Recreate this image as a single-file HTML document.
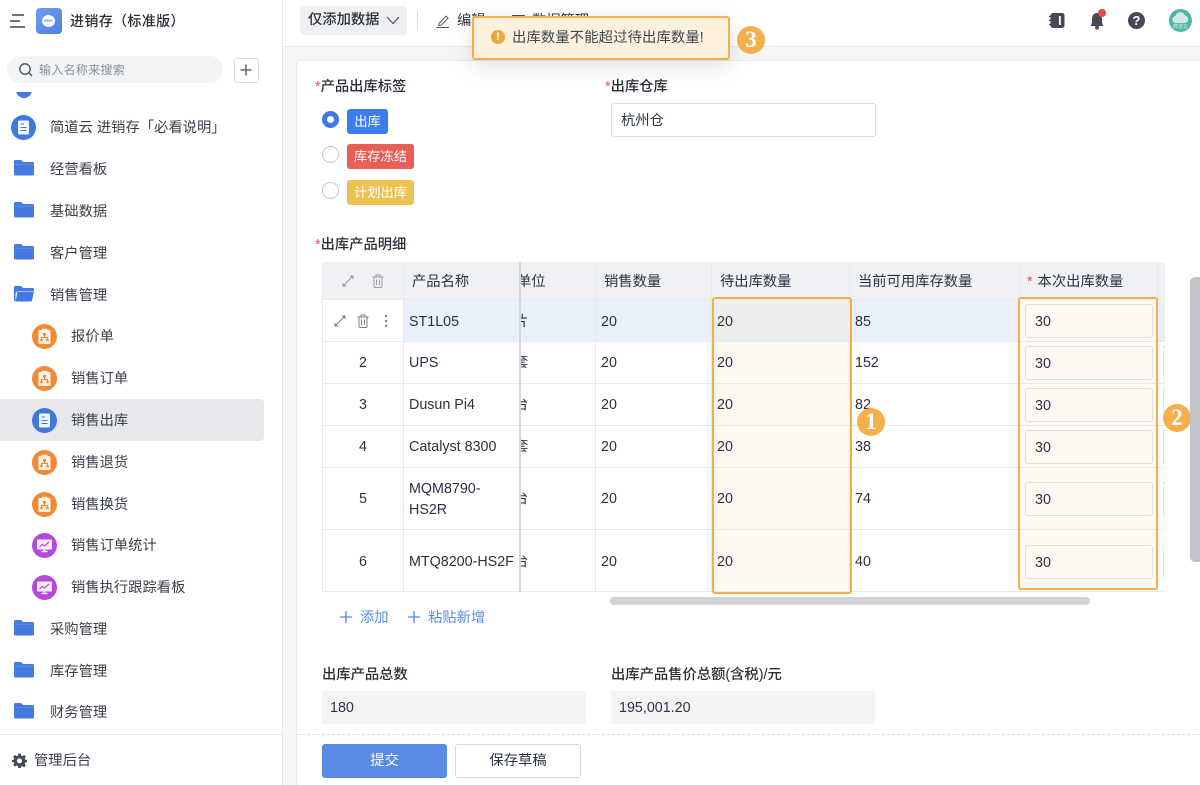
<!DOCTYPE html>
<html lang="zh"><head><meta charset="utf-8">
<style>
html,body{margin:0;padding:0;width:1200px;height:785px;overflow:hidden;background:#f4f5f7}
body{position:relative;font-family:"Liberation Sans","Noto Sans CJK SC",sans-serif;font-size:14.3px;color:#2c3242}
.a,.t{position:absolute}
.t{white-space:nowrap;line-height:20px;margin-top:1px}
.b{font-weight:500;color:#2a2e39;font-size:14.3px;margin-top:0}
.s{left:50px;color:#3a3f4b}
.c{left:71px;color:#3a3f4b}
svg{position:absolute;display:block}
.clip{position:absolute;left:322px;top:262px;width:843px;height:330px;overflow:hidden;background:#fff;border-radius:4px}
.h{position:absolute;background:#e7e9ec}
.in{position:absolute;left:1025px;width:126px;height:32px;border:1px solid #e0dfdc;border-radius:3px;background:#fdf9f2;line-height:34px;text-indent:9px}
.ann{position:absolute;width:28px;height:28px;border-radius:50%;background:#f6b04b;color:#fff;text-align:center;font:700 23px/28px "Liberation Serif",serif}
.r{position:absolute;border:2px solid #f6ae49;border-radius:3px;box-sizing:border-box}
.tag{position:absolute;left:347px;height:25px;border-radius:3px;color:#fff;text-align:center;line-height:26px;font-size:13.3px}
.rad{position:absolute;left:322px;width:15px;height:15px;border:1px solid #c4c7cd;border-radius:50%;background:#fff}
</style></head><body>

<!-- sidebar -->
<div class="a" style="left:0;top:0;width:282px;height:785px;background:#fff;border-right:1px solid #e6e7ea"></div>
<svg style="left:10px;top:14px" width="16" height="14" viewBox="0 0 16 14"><path d="M2 1H14M0 7H10M0 13H15" stroke="#3f4450" stroke-width="1.6" fill="none"/></svg>
<div class="a" style="left:36px;top:8px;width:26px;height:26px;border-radius:4px;background:linear-gradient(135deg,#6f9fee,#4d80e2)"></div>
<div class="a" style="left:42px;top:15px;width:13px;height:12px;border-radius:50%;background:#fff;color:#5b8de8;font:700 4px/12px 'Liberation Sans';text-align:center">ERP</div>
<div class="t" style="left:70px;top:10px;font-weight:500;color:#2a2e39;font-size:14px;letter-spacing:.35px">进销存（标准版）</div>

<div class="a" style="left:7px;top:56px;width:216px;height:27px;border-radius:14px;background:#f3f4f6"></div>
<svg style="left:18px;top:62px" width="16" height="16" viewBox="0 0 16 16"><circle cx="7" cy="7" r="5.2" stroke="#4a4f5a" stroke-width="1.3" fill="none"/><path d="M11 11L14 14" stroke="#4a4f5a" stroke-width="1.3"/></svg>
<div class="t" style="left:39px;top:59px;font-size:12px;color:#8b8f98;letter-spacing:.3px">输入名称来搜索</div>
<div class="a" style="left:234px;top:58px;width:23px;height:23px;border:1px solid #dcdde0;border-radius:3px;background:#fff"></div>
<svg style="left:239px;top:63px" width="14" height="14" viewBox="0 0 14 14"><path d="M7 1.5V12.500M1.500 7H12.500" stroke="#4a4f5a" stroke-width="1.3"/></svg>

<div class="a" style="left:16px;top:92px;width:16px;height:6px;overflow:hidden"><div style="position:absolute;left:0;top:-10px;width:16px;height:16px;border-radius:50%;background:#4278e0"></div></div>

<div class="a" style="left:11px;top:115px;width:25px;height:25px;border-radius:50%;background:#3f78e0"></div>
<svg style="left:17px;top:120px" width="13" height="15" viewBox="0 0 13 15"><rect x="1" y="0.5" width="11" height="14" rx="1.500" fill="#f2f6fe"/><path d="M3.500 4H7M3.500 7.500H9.500M3.500 10.500H9.500" stroke="#3f78e0" stroke-width="1.1"/></svg>
<div class="t s" style="top:117px">简道云 进销存「必看说明」</div>

<svg width="0" height="0" style="position:absolute"><defs>
<g id="fd"><path d="M0 2.500a1.500 1.500 0 0 1 1.500-1.500H7l2.200 2H18.500A1.500 1.500 0 0 1 20 4.500V15a1.500 1.500 0 0 1-1.500 1.500H1.500A1.500 1.500 0 0 1 0 15Z" fill="#4479e1"/><path d="M0 5.200H20" stroke="#6f98ea" stroke-width=".6"/></g>
<g id="or"><circle cx="12.500" cy="12.500" r="12.500" fill="#ef8a36"/><rect x="6.500" y="6" width="12" height="14" rx="1" fill="#fdf1e3"/><rect x="9.500" y="4.800" width="6" height="2.400" rx=".8" fill="#fdf1e3"/><path d="M12.500 9.500V13M9.500 16V13.500H15.500V16" stroke="#ef8a36" stroke-width="1.1" fill="none"/><rect x="11" y="9" width="3" height="2.400" fill="#ef8a36"/><rect x="8.300" y="15" width="2.400" height="2.200" fill="#ef8a36"/><rect x="14.300" y="15" width="2.400" height="2.200" fill="#ef8a36"/></g>
<g id="pu"><circle cx="12.500" cy="12.500" r="12.500" fill="#b44ad9"/><rect x="5" y="6.500" width="15" height="10" rx="1" fill="#f8ecfc"/><path d="M9.500 18.500H15.500M12.500 16.500V18.500" stroke="#f8ecfc" stroke-width="1.400"/><path d="M7.500 14L10.500 11.500L12.500 13L17 9" stroke="#b44ad9" stroke-width="1.200" fill="none"/></g>
</defs></svg>

<svg style="left:14px;top:159px" width="20" height="17"><use href="#fd"/></svg><div class="t s" style="top:159px">经营看板</div>
<svg style="left:14px;top:201px" width="20" height="17"><use href="#fd"/></svg><div class="t s" style="top:201px">基础数据</div>
<svg style="left:14px;top:243px" width="20" height="17"><use href="#fd"/></svg><div class="t s" style="top:243px">客户管理</div>
<svg style="left:14px;top:285px" width="20" height="17" viewBox="0 0 20 17"><path d="M0 2.500a1.500 1.500 0 0 1 1.500-1.500H7l2.200 2H18.500A1.500 1.500 0 0 1 20 4.500V6H4L1.500 8V16H0Z" fill="#4479e1"/><path d="M3.500 6.500H20L18 15.500a1.300 1.300 0 0 1-1.300 1H1.500Z" fill="#4479e1"/></svg><div class="t s" style="top:285px">销售管理</div>

<div class="a" style="left:0;top:399px;width:264px;height:42px;border-radius:0 4px 4px 0;background:#e7e8eb"></div>

<svg style="left:32px;top:324px" width="25" height="25"><use href="#or"/></svg><div class="t c" style="top:326px">报价单</div>
<svg style="left:32px;top:366px" width="25" height="25"><use href="#or"/></svg><div class="t c" style="top:368px">销售订单</div>
<div class="a" style="left:32px;top:408px;width:25px;height:25px;border-radius:50%;background:#3f78e0"></div>
<svg style="left:38px;top:413px" width="13" height="15" viewBox="0 0 13 15"><rect x="1" y="0.5" width="11" height="14" rx="1.500" fill="#f2f6fe"/><path d="M3.500 4H7M3.500 7.500H9.500M3.500 10.500H9.500" stroke="#3f78e0" stroke-width="1.1"/></svg>
<div class="t c" style="top:410px">销售出库</div>
<svg style="left:32px;top:450px" width="25" height="25"><use href="#or"/></svg><div class="t c" style="top:452px">销售退货</div>
<svg style="left:32px;top:492px" width="25" height="25"><use href="#or"/></svg><div class="t c" style="top:494px">销售换货</div>
<svg style="left:32px;top:533px" width="25" height="25"><use href="#pu"/></svg><div class="t c" style="top:535px">销售订单统计</div>
<svg style="left:32px;top:575px" width="25" height="25"><use href="#pu"/></svg><div class="t c" style="top:577px">销售执行跟踪看板</div>

<svg style="left:14px;top:619px" width="20" height="17"><use href="#fd"/></svg><div class="t s" style="top:619px">采购管理</div>
<svg style="left:14px;top:661px" width="20" height="17"><use href="#fd"/></svg><div class="t s" style="top:661px">库存管理</div>
<svg style="left:14px;top:702px" width="20" height="17"><use href="#fd"/></svg><div class="t s" style="top:702px">财务管理</div>

<div class="a" style="left:0;top:734px;width:282px;height:1px;background:#e6e7ea"></div>
<svg style="left:12px;top:753px" width="15" height="15" viewBox="0 0 24 24"><path fill="#454a56" fill-rule="evenodd" d="M10 1h4l.7 3.200 1.900.8 2.800-1.800 2.800 2.800L20.400 8.800l.8 1.900L24 11.400v3.200l-2.800.7-.8 1.900 1.800 2.800-2.800 2.800-2.800-1.800-1.900.8L14 24h-4l-.7-3.200-1.900-.8-2.800 1.800-2.800-2.800 1.800-2.800-.8-1.900L0 14.600v-3.200l2.800-.7.8-1.900L1.800 6l2.800-2.800 2.800 1.800 1.900-.8ZM12 8.500a4 4 0 1 0 0 8 4 4 0 0 0 0-8Z"/></svg>
<div class="t" style="left:34px;top:750px;color:#3a3f4b">管理后台</div>

<!-- topbar -->
<div class="a" style="left:283px;top:0;width:917px;height:46px;background:#fff;border-bottom:1px solid #e8e9ec"></div>
<div class="a" style="left:300px;top:6px;width:107px;height:29px;border-radius:4px;background:#eff0f3"></div>
<div class="t" style="left:308px;top:9px;font-weight:500;font-size:14.3px;color:#2a2e39">仅添加数据</div>
<svg style="left:386px;top:16px" width="14" height="9" viewBox="0 0 14 9"><path d="M1 1L7 7.500L13 1" stroke="#4a4f5a" stroke-width="1.2" fill="none"/></svg>
<div class="a" style="left:417px;top:11px;width:1px;height:20px;background:#dcdde0"></div>
<svg style="left:436px;top:14px" width="14" height="14" viewBox="0 0 14 14"><path d="M3 9.500L10 2.200L12 4.200L5 11.200L2.700 11.600ZM.5 13.500H13" stroke="#4a4f5a" stroke-width="1" fill="none"/></svg>
<div class="t" style="left:457px;top:10px">编辑</div>
<div class="t" style="left:532px;top:10px">数据管理</div>
<div class="a" style="left:512px;top:15px;width:11px;height:11px;border:1px solid #4a4f5a"></div>

<svg style="left:1049px;top:12px" width="16" height="17" viewBox="0 0 16 17"><rect x="1.500" y="1" width="14" height="15" rx="2.500" fill="#444a59"/><rect x="10" y="4" width="1.800" height="9" fill="#fff"/><path d="M0 4.500H3M0 8.500H3M0 12.500H3" stroke="#444a59" stroke-width="1.2"/></svg>
<svg style="left:1089px;top:9px" width="20" height="21" viewBox="0 0 20 21"><path d="M1.500 17C3 15 3 13 3 10C3 6.500 5 4 8 4C11 4 13 6.500 13 10C13 13 13 15 14.500 17Z" fill="#444a59"/><circle cx="8" cy="18.500" r="2" fill="#444a59"/><circle cx="13" cy="4" r="4" fill="#e64a45"/></svg>
<div class="a" style="left:1128px;top:12px;width:17px;height:17px;border-radius:50%;background:#444a59;color:#fff;font:700 13px/17px 'Liberation Sans';text-align:center">?</div>
<div class="a" style="left:1169px;top:9px;width:23px;height:23px;border-radius:50%;background:#4fb5a3"></div>
<svg style="left:1172px;top:11px" width="17" height="13" viewBox="0 0 17 13"><path d="M4 12a3.500 3.500 0 0 1-.5-7A5 5 0 0 1 13 4.500a3.800 3.800 0 0 1 0 7.500Z" fill="#cfe9e4"/></svg>
<div class="a" style="left:1169px;top:24px;width:23px;text-align:center;color:#dff2ee;font-size:5px;line-height:6px">简道云</div>

<!-- card -->
<div class="a" style="left:296px;top:60px;width:920px;height:740px;background:#fff;border:1px solid #e9eaed;border-radius:4px;box-sizing:border-box"></div>

<div class="t b" style="left:315px;top:77px"><span style="color:#e5534b">*</span>产品出库标签</div>
<div class="t b" style="left:605px;top:77px"><span style="color:#e5534b">*</span>出库仓库</div>

<div class="a" style="left:322px;top:111px;width:7px;height:7px;border:5px solid #3f78e0;border-radius:50%;background:#fff"></div>
<div class="tag" style="top:109px;width:41px;background:#3b7df0">出库</div>
<div class="rad" style="top:146px"></div>
<div class="tag" style="top:144px;width:67px;background:#e85f58">库存冻结</div>
<div class="rad" style="top:182px"></div>
<div class="tag" style="top:180px;width:67px;background:#ecc252">计划出库</div>

<div class="a" style="left:611px;top:103px;width:263px;height:32px;border:1px solid #dcdde0;border-radius:3px;background:#fff;line-height:34px;text-indent:9px">杭州仓</div>

<div class="t b" style="left:315px;top:235px"><span style="color:#e5534b">*</span>出库产品明细</div>

<!-- table -->
<div class="clip">
  <div class="a" style="left:0;top:0;width:843px;height:37px;background:#f0f1f4"></div>
  <div class="a" style="left:81px;top:37px;width:762px;height:42px;background:#e9f0fb"></div>
  <div class="a" style="left:389px;top:37px;width:138px;height:42px;background:#edeef0"></div>
  <div class="a" style="left:389px;top:79px;width:138px;height:251px;background:#fdf9f2"></div>
  <div class="a" style="left:697px;top:37px;width:138px;height:293px;background:#fdf9f2"></div>
</div>
<div class="h" style="left:322px;top:299px;width:843px;height:1px"></div>
<div class="h" style="left:322px;top:341px;width:843px;height:1px"></div>
<div class="h" style="left:322px;top:383px;width:843px;height:1px"></div>
<div class="h" style="left:322px;top:425px;width:843px;height:1px"></div>
<div class="h" style="left:322px;top:467px;width:843px;height:1px"></div>
<div class="h" style="left:322px;top:529px;width:843px;height:1px"></div>
<div class="h" style="left:322px;top:591px;width:843px;height:1px"></div>
<div class="h" style="left:322px;top:262px;width:1px;height:330px"></div>
<div class="h" style="left:403px;top:262px;width:1px;height:330px"></div>
<div class="h" style="left:595px;top:262px;width:1px;height:330px"></div>
<div class="h" style="left:711px;top:262px;width:1px;height:330px"></div>
<div class="h" style="left:849px;top:262px;width:1px;height:330px"></div>
<div class="h" style="left:1019px;top:262px;width:1px;height:330px"></div>
<div class="h" style="left:1157px;top:262px;width:1px;height:330px"></div>

<svg style="left:341px;top:274px" width="14" height="14" viewBox="0 0 14 14"><path d="M2 12L12 2" stroke="#999ca3" stroke-width="1.1"/><path d="M8.500 1.500H12.500V5.500ZM1.500 8.500V12.500H5.500Z" fill="#999ca3"/></svg>
<svg style="left:372px;top:274px" width="12" height="14" viewBox="0 0 12 14"><path d="M.5 3H11.500M4 3V1H8V3M2 3V12.500A1 1 0 0 0 3 13.500H9A1 1 0 0 0 10 12.500V3M4.500 5.500V11M7.500 5.500V11" stroke="#999ca3" fill="none"/></svg>
<div class="t" style="left:412px;top:271px">产品名称</div>
<div class="t" style="left:520px;top:271px;width:30px;overflow:hidden"><span style="margin-left:-3px">单位</span></div>
<div class="t" style="left:604px;top:271px">销售数量</div>
<div class="t" style="left:720px;top:271px">待出库数量</div>
<div class="t" style="left:858px;top:271px">当前可用库存数量</div>
<div class="t" style="left:1027px;top:271px"><span style="color:#e5534b;margin-right:1px">*</span> 本次出库数量</div>

<svg style="left:333px;top:314px" width="14" height="14" viewBox="0 0 14 14"><path d="M2 12L12 2" stroke="#7d8088" stroke-width="1.1"/><path d="M8.500 1.500H12.500V5.500ZM1.500 8.500V12.500H5.500Z" fill="#7d8088"/></svg>
<svg style="left:357px;top:314px" width="12" height="14" viewBox="0 0 12 14"><path d="M.5 3H11.500M4 3V1H8V3M2 3V12.500A1 1 0 0 0 3 13.500H9A1 1 0 0 0 10 12.500V3M4.500 5.500V11M7.500 5.500V11" stroke="#7d8088" fill="none"/></svg>
<svg style="left:384px;top:314px" width="4" height="14" viewBox="0 0 4 14"><circle cx="2" cy="2" r="1.200" fill="#7d8088"/><circle cx="2" cy="7" r="1.200" fill="#7d8088"/><circle cx="2" cy="12" r="1.200" fill="#7d8088"/></svg>

<div class="t" style="left:359px;top:352px">2</div>
<div class="t" style="left:359px;top:394px">3</div>
<div class="t" style="left:359px;top:436px">4</div>
<div class="t" style="left:359px;top:488px">5</div>
<div class="t" style="left:359px;top:551px">6</div>

<div class="t" style="left:409px;top:311px">ST1L05</div>
<div class="t" style="left:409px;top:352px">UPS</div>
<div class="t" style="left:409px;top:394px">Dusun Pi4</div>
<div class="t" style="left:409px;top:436px">Catalyst 8300</div>
<div class="t" style="left:409px;top:478px;line-height:21px">MQM8790-<br>HS2R</div>
<div class="t" style="left:409px;top:551px">MTQ8200-HS2F</div>

<div class="t" style="left:521px;top:311px;width:10px;overflow:hidden"><span style="margin-left:-7px">片</span></div>
<div class="t" style="left:521px;top:352px;width:10px;overflow:hidden"><span style="margin-left:-7px">套</span></div>
<div class="t" style="left:521px;top:394px;width:10px;overflow:hidden"><span style="margin-left:-7px">台</span></div>
<div class="t" style="left:521px;top:436px;width:10px;overflow:hidden"><span style="margin-left:-7px">套</span></div>
<div class="t" style="left:521px;top:488px;width:10px;overflow:hidden"><span style="margin-left:-7px">台</span></div>
<div class="t" style="left:521px;top:551px;width:10px;overflow:hidden"><span style="margin-left:-7px">台</span></div>

<div class="a" style="left:519px;top:262px;width:2px;height:330px;background:#d5d7dc"></div>

<div class="t" style="left:601px;top:311px">20</div>
<div class="t" style="left:601px;top:352px">20</div>
<div class="t" style="left:601px;top:394px">20</div>
<div class="t" style="left:601px;top:436px">20</div>
<div class="t" style="left:601px;top:488px">20</div>
<div class="t" style="left:601px;top:551px">20</div>

<div class="t" style="left:717px;top:311px">20</div>
<div class="t" style="left:717px;top:352px">20</div>
<div class="t" style="left:717px;top:394px">20</div>
<div class="t" style="left:717px;top:436px">20</div>
<div class="t" style="left:717px;top:488px">20</div>
<div class="t" style="left:717px;top:551px">20</div>

<div class="t" style="left:855px;top:311px">85</div>
<div class="t" style="left:855px;top:352px">152</div>
<div class="t" style="left:855px;top:394px">82</div>
<div class="t" style="left:855px;top:436px">38</div>
<div class="t" style="left:855px;top:488px">74</div>
<div class="t" style="left:855px;top:551px">40</div>

<div class="in" style="top:304px">30</div>
<div class="in" style="top:346px">30</div>
<div class="in" style="top:388px">30</div>
<div class="in" style="top:430px">30</div>
<div class="in" style="top:482px">30</div>
<div class="in" style="top:545px">30</div>

<div class="a" style="left:1163px;top:304px;width:2px;height:32px;border:1px solid #e6e7ea;border-right:0"></div>
<div class="a" style="left:1163px;top:346px;width:2px;height:32px;border:1px solid #e6e7ea;border-right:0"></div>
<div class="a" style="left:1163px;top:388px;width:2px;height:32px;border:1px solid #e6e7ea;border-right:0"></div>
<div class="a" style="left:1163px;top:430px;width:2px;height:32px;border:1px solid #e6e7ea;border-right:0"></div>
<div class="a" style="left:1163px;top:482px;width:2px;height:32px;border:1px solid #e6e7ea;border-right:0"></div>
<div class="a" style="left:1163px;top:545px;width:2px;height:32px;border:1px solid #e6e7ea;border-right:0"></div>

<div class="r" style="left:712px;top:297px;width:140px;height:297px"></div>
<div class="r" style="left:1018px;top:297px;width:140px;height:293px"></div>
<div class="ann" style="left:857px;top:408px">1</div>
<div class="ann" style="left:1163px;top:404px">2</div>

<div class="a" style="left:610px;top:597px;width:480px;height:8px;border-radius:4px;background:#d2d3d7"></div>
<div class="a" style="left:1190px;top:277px;width:10px;height:285px;border-radius:5px 0 0 5px;background:#c2c3c8"></div>

<svg style="left:339px;top:610px" width="14" height="14" viewBox="0 0 14 14"><path d="M7 1V13M1 7H13" stroke="#4f86e6" stroke-width="1.300"/></svg>
<div class="t" style="left:360px;top:607px;color:#5a8de8">添加</div>
<svg style="left:407px;top:610px" width="14" height="14" viewBox="0 0 14 14"><path d="M7 1V13M1 7H13" stroke="#4f86e6" stroke-width="1.300"/></svg>
<div class="t" style="left:428px;top:607px;color:#5a8de8">粘贴新增</div>

<div class="t b" style="left:322px;top:665px">出库产品总数</div>
<div class="t b" style="left:611px;top:665px">出库产品售价总额(含税)/元</div>
<div class="a" style="left:322px;top:691px;width:264px;height:33px;background:#f3f4f6;border-radius:2px;line-height:35px;text-indent:8px">180</div>
<div class="a" style="left:611px;top:691px;width:264px;height:33px;background:#f3f4f6;border-radius:2px;line-height:35px;text-indent:8px">195,001.20</div>

<div class="a" style="left:297px;top:734px;width:903px;border-top:1px dashed #dfe0e3"></div>
<div class="a" style="left:322px;top:744px;width:125px;height:34px;border-radius:3px;background:#5a8ae6;color:#fff;text-align:center;line-height:35px">提交</div>
<div class="a" style="left:455px;top:744px;width:124px;height:32px;border:1px solid #d8d9dc;border-radius:3px;background:#fff;text-align:center;line-height:33px">保存草稿</div>

<!-- toast -->
<div class="a" style="left:472px;top:16px;width:258px;height:44px;box-sizing:border-box;border:2px solid #f6ae49;border-radius:3px;background:#fdf1de;box-shadow:0 6px 22px rgba(0,0,0,.12)"></div>
<div class="a" style="left:491px;top:30px;width:14px;height:14px;border-radius:50%;background:#e9a93c;color:#fff;font:700 11px/14px 'Liberation Sans';text-align:center">!</div>
<div class="t" style="left:512px;top:28px;margin-top:0;color:#41454f;letter-spacing:.15px">出库数量不能超过待出库数量!</div>
<div class="ann" style="left:737px;top:26px">3</div>

</body></html>
